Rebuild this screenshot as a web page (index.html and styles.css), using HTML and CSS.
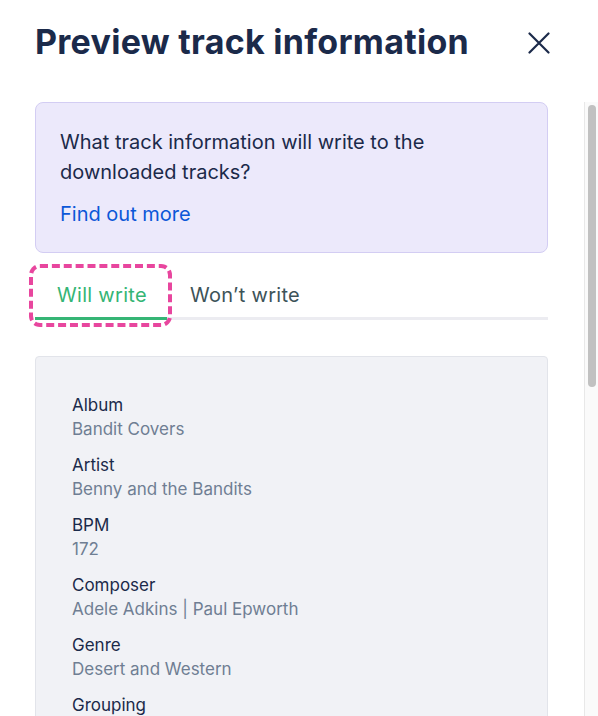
FILE: index.html
```html
<!DOCTYPE html>
<html>
<head>
<meta charset="utf-8">
<link rel="stylesheet" href="styles.css">
</head>
<body>
<div class="modal">
  <header class="header">
    <h1 class="title">Preview track information</h1>
    <button class="close" aria-label="Close">
      <svg width="22" height="22" viewBox="0 0 22 22"><path d="M1.5 1.5L20.5 20.5M20.5 1.5L1.5 20.5" stroke="#1b2a4a" stroke-width="2.2" stroke-linecap="round"/></svg>
    </button>
  </header>
  <div class="body">
    <div class="content">
      <div class="info">
        <p class="info-text">What track information will write to the downloaded tracks?</p>
        <a class="info-link" href="#">Find out more</a>
      </div>
      <div class="tabs">
        <div class="tab active">Will write</div>
        <div class="tab">Won’t write</div>
      </div>
      <div class="panel">
        <div class="item"><div class="label">Album</div><div class="value">Bandit Covers</div></div>
        <div class="item"><div class="label">Artist</div><div class="value">Benny and the Bandits</div></div>
        <div class="item"><div class="label">BPM</div><div class="value">172</div></div>
        <div class="item"><div class="label">Composer</div><div class="value">Adele Adkins | Paul Epworth</div></div>
        <div class="item"><div class="label">Genre</div><div class="value">Desert and Western</div></div>
        <div class="item"><div class="label">Grouping</div></div>
      </div>
    </div>
    <div class="scrollbar"><div class="thumb"></div></div>
  </div>
</div>
</body>
</html>
```
FILE: styles.css
```css
* { box-sizing: border-box; }
html, body { margin: 0; padding: 0; background: #fff; overflow: hidden; }
body { font-family: "Inter", "Noto Sans", sans-serif; color: #1b2a4a; height: 716px; }
.modal { height: 716px; display: flex; flex-direction: column; }
.header { display: flex; align-items: flex-start; justify-content: space-between; padding: 20px 48px 0 35px; height: 102px; flex: none; }
.title { margin: 0; font-size: 34px; line-height: 44px; font-weight: 700; color: #1b2a4a; letter-spacing: 0.28px; }
.close { border: 0; background: none; padding: 0; margin-top: 12px; width: 22px; height: 22px; display: flex; }
.close svg { width: 22px; height: 22px; }
.body { flex: 1; display: flex; overflow: hidden; }
.content { flex: 1; padding: 0 36px 0 35px; display: flex; flex-direction: column; }
.info { background: #ece9fb; border: 1px solid #d3cdf3; border-radius: 8px; padding: 24px 60px 26px 24px; }
.info-text { margin: 0; font-size: 20px; line-height: 30px; color: #1b2a4a; }
.info-link { display: inline-block; margin-top: 15px; font-size: 20px; line-height: 24px; color: #0b57d8; text-decoration: none; }
.tabs { display: flex; margin-top: 30px; border-bottom: 3px solid #ececf1; }
.tab { font-size: 20px; line-height: 24px; letter-spacing: 0.3px; padding: 0 20px 10px 22px; color: #3d5358; margin-bottom: -3px; border-bottom: 3px solid transparent; }
.tab.active { color: #35b575; border-bottom-color: #35b575; position: relative; }
.tab.active::after { content: ""; position: absolute; left: -6px; right: -5px; top: -19px; bottom: -10px; border: 4px dashed #e8469e; border-radius: 11px; }
.tab + .tab { padding-left: 23px; }
.panel { margin-top: 36px; flex: 1; background: #f1f2f6; border: 1px solid #e2e4ea; border-radius: 4px; padding: 36px 36px; }
.item { margin-bottom: 12px; }
.label { font-size: 17px; line-height: 24px; color: #1b2a4a; }
.value { font-size: 17px; line-height: 24px; color: #6f7e93; }
.scrollbar { width: 14px; border-left: 1px solid #e8e8e8; background: #fafafa; padding: 3px 2px 0 3px; }
.thumb { height: 282px; background: #c1c1c1; border-radius: 4px; }
```
